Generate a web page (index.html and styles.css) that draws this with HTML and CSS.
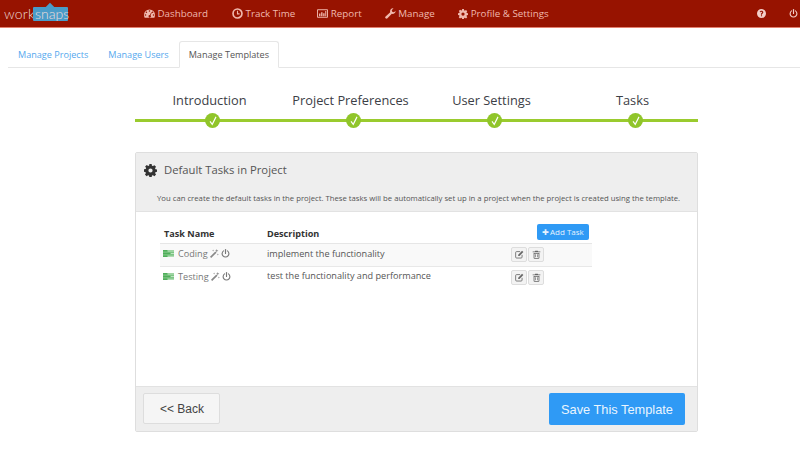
FILE: index.html
```html
<!DOCTYPE html>
<html lang="en">
<head>
<meta charset="utf-8">
<title>Manage Templates</title>
<link rel="stylesheet" href="styles.css">
</head>
<body>
<svg class="defs" width="0" height="0" aria-hidden="true">
  <defs>
    <symbol id="i-gear" viewBox="0 0 16 16"><path fill-rule="evenodd" d="M6.6 0h2.8l.4 2.1 1.2.5L12.800 1.400l2 2-1.200 1.800.5 1.200 2.100.4v2.800l-2.100.4-.5 1.200 1.200 1.800-2 2-1.800-1.200-1.200.5-.4 2.100H6.600l-.4-2.100-1.200-.5-1.800 1.200-2-2 1.200-1.800-.5-1.200L0 9.400V6.600l2.100-.4.5-1.200L1.400 3.200l2-2L5.200 2.400l1.200-.5zM8 5.400a2.600 2.600 0 1 0 0 5.200 2.600 2.600 0 0 0 0-5.200z"/></symbol>
    <symbol id="i-power" viewBox="0 0 16 16"><path d="M8 1v7" fill="none" stroke="currentColor" stroke-width="2" stroke-linecap="round"/><path d="M4.600 3.300a6 6 0 1 0 6.800 0" fill="none" stroke="currentColor" stroke-width="2" stroke-linecap="round"/></symbol>
    <symbol id="i-wand" viewBox="0 0 16 16"><path d="M1 15 10.500 5.500" stroke="currentColor" stroke-width="3" fill="none"/><path d="M12 0l.8 2.200 2.200.8-2.200.8-.8 2.200-.8-2.200-2.200-.8 2.200-.8zM5.500 1l.5 1.300 1.300.5-1.300.5-.5 1.300-.5-1.300-1.300-.5 1.300-.5zM14 8l.5 1.300 1.300.5-1.300.5-.5 1.300-.5-1.300-1.300-.5 1.300-.5z"/></symbol>
    <symbol id="i-check" viewBox="0 0 16 16"><path d="M4 8.500 7 12.500 12 2.500" fill="none" stroke="#fff" stroke-width="1.500"/></symbol>
    <symbol id="i-edit" viewBox="0 0 14 14"><path d="M11 7.500V11a1.500 1.500 0 0 1-1.500 1.500h-7A1.500 1.500 0 0 1 1 11V4a1.500 1.500 0 0 1 1.500-1.500H8" fill="none" stroke="currentColor" stroke-width="1.300"/><path d="M5 9.300V7.200L11 1.200l2 2L7 9.300z"/></symbol>
    <symbol id="i-trash" viewBox="0 0 14 14"><path d="M5 1h4l.6 1.400H13v1.200H1V2.400h3.400zM2.500 4.500h9V12a1.500 1.500 0 0 1-1.500 1.500H4A1.500 1.500 0 0 1 2.500 12zm1.300 1.200V12l.3.300h5.800l.3-.3V5.700zm1.400 1h1v4.700h-1zm2.600 0h1v4.700h-1z"/></symbol>
    <symbol id="i-task" viewBox="0 0 11 7"><path fill="#7cc583" d="M0 0h11v7H0z"/><path fill="#4fae5a" d="M0 0h4v1.500H0zM0 2.700h7v1.500H0zM0 5.500h4V7H0z"/><path fill="#bfe3c2" d="M5 .4h6v1H5zM8 3.100h3v1H8zM5 5.800h6v1H5z"/></symbol>
  </defs>
</svg>

<header class="topbar">
  <a class="logo"><span class="logo-work">work</span><span class="logo-snaps">snaps</span></a>
  <nav class="mainnav">
    <a class="navlink nav-dash"><svg class="navicon" viewBox="0 0 16 16"><path fill="currentColor" fill-rule="evenodd" d="M8 2a8 8 0 0 0-8 8c0 1.500.4 2.800 1 4h14c.6-1.200 1-2.500 1-4a8 8 0 0 0-8-8zM8 3.300a1.100 1.100 0 1 1 0 2.200 1.100 1.100 0 0 1 0-2.200zM3.500 5a1.100 1.100 0 1 1 0 2.200 1.100 1.100 0 0 1 0-2.200zm9 0a1.100 1.100 0 1 1 0 2.200 1.100 1.100 0 0 1 0-2.200zM2.200 9a1.100 1.100 0 1 1 0 2.200 1.100 1.100 0 0 1 0-2.200zm11.600 0a1.100 1.100 0 1 1 0 2.200 1.100 1.100 0 0 1 0-2.200zM10.600 6l.9.500-2 4a1.800 1.800 0 1 1-1-.4z"/></svg>Dashboard</a>
    <a class="navlink nav-track"><svg class="navicon" viewBox="0 0 16 16"><circle cx="8" cy="8" r="6.500" fill="none" stroke="currentColor" stroke-width="2.400"/><path d="M8 4v4.500h3" fill="none" stroke="currentColor" stroke-width="1.600"/></svg>Track Time</a>
    <a class="navlink nav-report"><svg class="navicon" viewBox="0 0 16 16"><path d="M.7 2.500h14.600v11H.7z" fill="none" stroke="currentColor" stroke-width="1.400"/><path fill="currentColor" d="M3 8h2v4H3zM6 6h2v6H6zM9 7.500h2V12H9zM12 4.500h1.500V12H12z"/></svg>Report</a>
    <a class="navlink nav-manage"><svg class="navicon" viewBox="0 0 16 16"><path fill="currentColor" d="M15.500 4.300a4.300 4.300 0 0 1-5.600 4.100L3.600 15a1.900 1.900 0 0 1-2.700-2.700l6.700-6.200A4.300 4.300 0 0 1 12.400.5L9.800 3.100l.7 2.300 2.300.6z"/></svg>Manage</a>
    <a class="navlink nav-profile"><svg class="navicon gear-small"><use href="#i-gear"/></svg>Profile &amp; Settings</a>
  </nav>
  <div class="toplinks">
    <a class="topicon"><svg viewBox="0 0 16 16"><path fill="currentColor" fill-rule="evenodd" d="M8 0a8 8 0 1 1 0 16A8 8 0 0 1 8 0zM7 11v2h2v-2zM8 3C6.300 3 5 4 4.800 5.500l1.900.4C6.900 5.200 7.300 4.800 8 4.800s1.100.4 1.100.9c0 .5-.4.800-1 1.200-.8.500-1.100 1.100-1.100 2V10h2v-.6c0-.5.200-.7.800-1.100.9-.6 1.400-1.300 1.400-2.500C11.200 4.100 9.800 3 8 3z"/></svg></a>
    <a class="topicon"><svg><use href="#i-power"/></svg></a>
  </div>
</header>

<ul class="tabs">
  <li class="tab">Manage Projects</li>
  <li class="tab">Manage Users</li>
  <li class="tab tab-active">Manage Templates</li>
</ul>

<main class="content">
  <section class="wizard">
    <div class="step"><span class="step-label">Introduction</span><span class="step-dot"><svg><use href="#i-check"/></svg></span></div>
    <div class="step"><span class="step-label">Project Preferences</span><span class="step-dot"><svg><use href="#i-check"/></svg></span></div>
    <div class="step"><span class="step-label">User Settings</span><span class="step-dot"><svg><use href="#i-check"/></svg></span></div>
    <div class="step"><span class="step-label">Tasks</span><span class="step-dot"><svg><use href="#i-check"/></svg></span></div>
  </section>

  <section class="panel">
    <div class="panel-head">
      <h2 class="panel-title"><svg class="title-gear"><use href="#i-gear"/></svg>Default Tasks in Project</h2>
      <p class="panel-note">You can create the default tasks in the project. These tasks will be automatically set up in a project when the project is created using the template.</p>
    </div>
    <div class="panel-body">
      <div class="row row-head">
        <div class="cell-name">Task Name</div>
        <div class="cell-desc">Description</div>
        <div class="cell-act"><button class="btn-add"><span class="plus">✚</span>Add Task</button></div>
      </div>
      <div class="row row-task row-odd">
        <div class="cell-name"><svg class="task-icon"><use href="#i-task"/></svg>Coding<svg class="mini"><use href="#i-wand"/></svg><svg class="mini power"><use href="#i-power"/></svg></div>
        <div class="cell-desc">implement the functionality</div>
        <div class="cell-act"><button class="btn-icon"><svg><use href="#i-edit"/></svg></button><button class="btn-icon"><svg><use href="#i-trash"/></svg></button></div>
      </div>
      <div class="row row-task">
        <div class="cell-name"><svg class="task-icon"><use href="#i-task"/></svg>Testing<svg class="mini"><use href="#i-wand"/></svg><svg class="mini power"><use href="#i-power"/></svg></div>
        <div class="cell-desc">test the functionality and performance</div>
        <div class="cell-act"><button class="btn-icon"><svg><use href="#i-edit"/></svg></button><button class="btn-icon"><svg><use href="#i-trash"/></svg></button></div>
      </div>
    </div>
    <div class="panel-foot">
      <button class="btn-back">&lt;&lt; Back</button>
      <button class="btn-save">Save This Template</button>
    </div>
  </section>
</main>
</body>
</html>
```

FILE: styles.css
```css
* { box-sizing: border-box; }
html, body { margin: 0; padding: 0; }
body {
  background: #fff;
  color: #444;
  font-family: "Open Sans", sans-serif;
  font-size: 12px;
  overflow: hidden;
  height: 465px;
}
.defs { position: absolute; }
.topbar {
  height: 28px;
  background: #971300;
  border-bottom: 1px solid #e4806f;
  display: flex;
  align-items: center;
  color: #f0b9ae;
}
.logo {
  width: 144px;
  padding-left: 4px;
  display: flex;
  align-items: center;
  font-family: "Lato", sans-serif;
  font-weight: 300;
  font-size: 14px;
  line-height: 14px;
  color: #eddcd9;
}
.logo-work { width: 29px; letter-spacing: .2px; }
.logo-snaps {
  background: #4a9cc9;
  width: 35px;
  padding: 0 0 0 2px;
  border-radius: 1px;
  height: 14px;
  line-height: 13px;
  margin-top: 1px;
  position: relative;
  z-index: 0;
}
.logo-snaps::before {
  content: "";
  position: absolute;
  left: 14px;
  top: -3px;
  width: 6px;
  height: 6px;
  background: #4a9cc9;
  transform: rotate(45deg);
  z-index: -1;
}
.mainnav { display: flex; align-items: center; font-size: 9.800px; }
.navlink { display: flex; align-items: center; white-space: nowrap; }
.navicon { width: 11px; height: 11px; margin-right: 2.500px; color: #f0b9ae; fill: currentColor; }
.nav-track { margin-left: 24px; }
.nav-report { margin-left: 22px; }
.nav-manage { margin-left: 23px; }
.nav-profile { margin-left: 23px; }
.gear-small { width: 10px; height: 10px; margin-right: 3px; }
.toplinks { margin-left: auto; display: flex; padding-right: 2px; }
.topicon { width: 9px; height: 9px; margin-left: 23px; color: #f3cfc8; display: flex; }
.topicon svg { width: 9px; height: 9px; }

.tabs {
  list-style: none;
  margin: 13px 0 0 8px;
  padding: 0;
  height: 27px;
  display: flex;
  border-bottom: 1px solid #e6e6e6;
  font-size: 9.100px;
  color: #55a8ee;
}
.tab { padding: 7px 10px 0; height: 27px; line-height: 14px; }
.tab-active {
  color: #555;
  background: #fff;
  border: 1px solid #e6e6e6;
  border-bottom-color: #fff;
  border-radius: 3px 3px 0 0;
  padding: 6px 9px 0;
}
.content { width: 563px; margin: 0 0 0 135px; }
.wizard {
  display: flex;
  height: 60px;
  margin-top: 24px;
  padding-left: 7px;
  background: linear-gradient(#9acb2e, #9acb2e) 0 27px / 100% 3px no-repeat;
}
.step { width: 141px; flex: none; display: flex; flex-direction: column; align-items: center; }
.step-label { font-size: 12.800px; line-height: 16px; color: #3c4046; white-space: nowrap; margin-left: -6px; }
.step-dot {
  width: 15px;
  height: 15px;
  margin-top: 5px;
  border-radius: 50%;
  background: #90c52a;
  display: flex;
  align-items: center;
  justify-content: center;
}
.step-dot svg { width: 12px; height: 12px; }

.panel {
  height: 280px;
  border: 1px solid #dedede;
  border-radius: 2px;
  display: flex;
  flex-direction: column;
}
.panel-head {
  height: 59px;
  background: #eee;
  border-bottom: 1px solid #e2e2e2;
  padding: 8px 0 0 8px;
}
.panel-title {
  margin: 0;
  display: flex;
  align-items: center;
  font-size: 11.270px;
  font-weight: 400;
  line-height: 18px;
  color: #555;
}
.title-gear { width: 13px; height: 13px; margin-right: 7px; fill: #333; }
.panel-note { margin: 13px 0 0 13px; font-size: 7.730px; line-height: 12px; color: #555; white-space: nowrap; }
.panel-body { flex: 1; padding-top: 13px; }
.row { display: flex; margin-left: 24px; width: 432px; }
.row-head { height: 19px; align-items: center; font-size: 9.100px; font-weight: 700; color: #333; border-bottom: 1px solid #e6e6e6; padding-bottom: 2px; }
.row-head .cell-name { padding-left: 4px; }
.row-task { height: 22.500px; align-items: center; font-size: 9.150px; border-bottom: 1px solid transparent; color: #555; }
.row-odd { background: #f9f9f9; border-bottom-color: #e8e8e8; }
.cell-name { width: 107px; display: flex; align-items: center; padding-left: 3px; }
.row-task .cell-name { color: #777; padding-bottom: 2px; }
.row-task .cell-desc { padding-bottom: 3px; }
.cell-desc { width: 244px; }
.cell-act { display: flex; gap: 1px; }
.row-head .cell-act { margin-left: 26px; }
.task-icon { width: 11px; height: 7px; margin-right: 4px; }
.mini { width: 9px; height: 9px; margin-left: 2px; fill: #888; color: #888; }
.mini.power { color: #777; }
.btn-add {
  width: 52px;
  height: 16px;
  margin-top: -2px;
  padding: 0;
  border: 0;
  border-radius: 2px;
  background: #2f9af5;
  color: #e4f2fe;
  font-family: "Open Sans", sans-serif;
  font-size: 8px;
  line-height: 16px;
  white-space: nowrap;
}
.plus { margin-right: 1px; font-size: 8px; font-family: "DejaVu Sans", sans-serif; }
.btn-icon {
  width: 16px;
  height: 15px;
  padding: 0;
  border: 1px solid #ddd;
  border-radius: 2px;
  background: #f3f3f3;
  color: #666;
  display: flex;
  align-items: center;
  justify-content: center;
}
.btn-icon svg { width: 9px; height: 9px; fill: #666; color: #666; }
.panel-foot {
  height: 45px;
  background: #eee;
  border-top: 1px solid #e2e2e2;
  display: flex;
  justify-content: space-between;
  align-items: flex-start;
  padding: 6px 12px 0 7px;
}
.btn-back {
  width: 77px;
  height: 31px;
  padding: 0 0 0 1px;
  border: 1px solid #ddd;
  border-radius: 2px;
  background: #f5f5f5;
  color: #444;
  font-family: "Liberation Sans", sans-serif;
  font-size: 12px;
}
.btn-save {
  width: 136px;
  height: 32px;
  padding: 0;
  border: 0;
  border-radius: 2px;
  background: #2f9af5;
  color: #eaf5fe;
  font-family: "Liberation Sans", sans-serif;
  font-size: 12.800px;
}
```
